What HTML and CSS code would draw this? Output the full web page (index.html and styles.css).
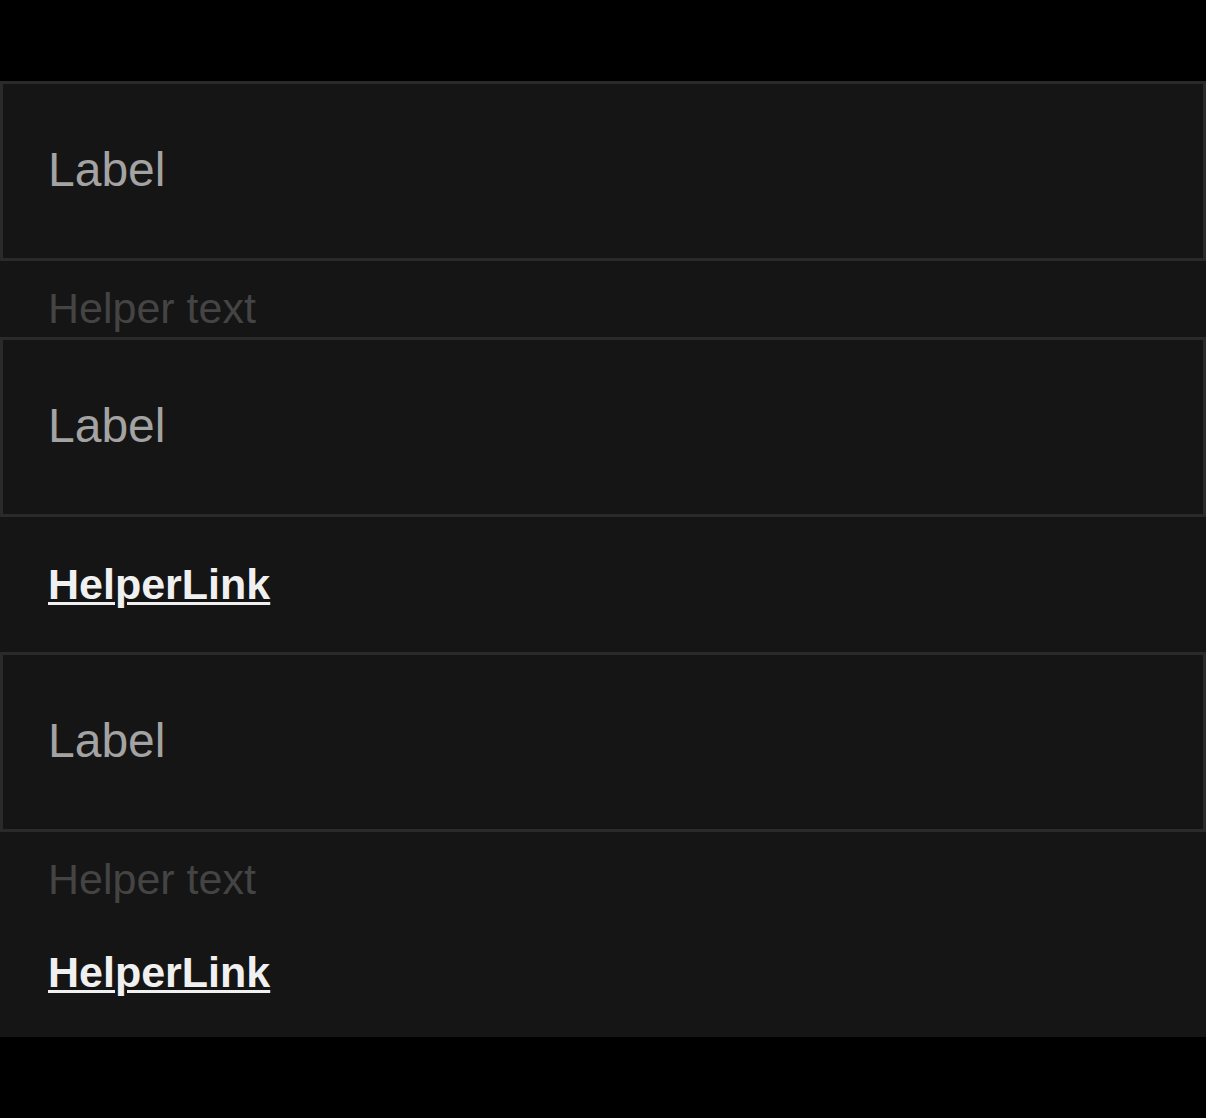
FILE: index.html
```html
<!DOCTYPE html>
<html lang="en">
<head>
    <meta charset="UTF-8">
    <meta name="viewport" content="width=device-width, initial-scale=1.0">
    <title>Text fields</title>
    <link rel="stylesheet" href="styles.css">
</head>
<body>

<div class="panel">
    <!-- Field with helper text -->
    <div class="field">
        <div class="input"><span class="label">Label</span></div>
        <div class="helper">Helper text</div>
    </div>

    <!-- Field with helper link -->
    <div class="field">
        <div class="input"><span class="label">Label</span></div>
        <div class="link-row"><a href="#" class="helper-link">HelperLink</a></div>
    </div>

    <!-- Field with both -->
    <div class="field">
        <div class="input"><span class="label">Label</span></div>
        <div class="helper">Helper text</div>
        <div class="link-row"><a href="#" class="helper-link">HelperLink</a></div>
    </div>
</div>

</body>
</html>
```

FILE: styles.css
```css
body {
    margin: 0;
    background-color: #000;
    font-family: "Liberation Sans", Arial, sans-serif;
}
.panel {
    margin-top: 81px;
    background-color: #151515;
    display: flex;
    flex-direction: column;
    gap: 3px;
}
.input {
    height: 180px;
    box-sizing: border-box;
    border: 3px solid #2a2a2a;
    padding-left: 45px;
    padding-bottom: 3px;
    display: flex;
    align-items: center;
}
.label {
    font-size: 48px;
    color: #a3a3a3;
}
.helper {
    font-size: 43px;
    line-height: 51px;
    padding: 22px 48px 0;
    color: #444;
}
.link-row {
    font-size: 43px;
    line-height: 43px;
    padding: 46px 48px 43px;
}
.helper-link {
    font-weight: bold;
    color: #f0f0f0;
    text-decoration: underline;
    text-decoration-thickness: 3px;
    text-underline-offset: 3px;
}
```
